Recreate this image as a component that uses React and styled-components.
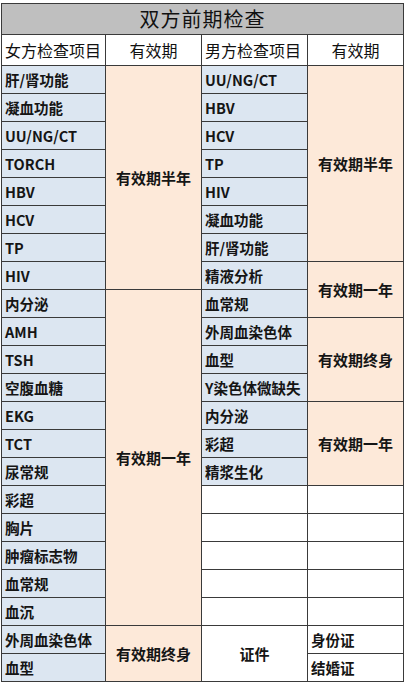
import styled, { createGlobalStyle } from 'styled-components';

const GlobalStyle = createGlobalStyle`
  html, body {
    margin: 0;
    padding: 0;
    background: #ffffff;
  }
  body {
    font-family: "Noto Sans CJK SC", "Noto Sans", sans-serif;
    color: #111111;
  }
`;

const PEACH = '#fde9d9';
const BLUE = '#dce6f1';

// each row: [left item, left period (null = covered by span), right item, right period]
const rows = [
  ['肝/肾功能', { text: '有效期半年', span: 8, fill: PEACH }, 'UU/NG/CT', { text: '有效期半年', span: 7, fill: PEACH }],
  ['凝血功能', null, 'HBV', null],
  ['UU/NG/CT', null, 'HCV', null],
  ['TORCH', null, 'TP', null],
  ['HBV', null, 'HIV', null],
  ['HCV', null, '凝血功能', null],
  ['TP', null, '肝/肾功能', null],
  ['HIV', null, '精液分析', { text: '有效期一年', span: 2, fill: PEACH }],
  ['内分泌', { text: '有效期一年', span: 12, fill: PEACH }, '血常规', null],
  ['AMH', null, '外周血染色体', { text: '有效期终身', span: 3, fill: PEACH }],
  ['TSH', null, '血型', null],
  ['空腹血糖', null, 'Y染色体微缺失', null],
  ['EKG', null, '内分泌', { text: '有效期一年', span: 3, fill: PEACH }],
  ['TCT', null, '彩超', null],
  ['尿常规', null, '精浆生化', null],
  ['彩超', null, '', { text: '', span: 1, fill: '#fff' }],
  ['胸片', null, '', { text: '', span: 1, fill: '#fff' }],
  ['肿瘤标志物', null, '', { text: '', span: 1, fill: '#fff' }],
  ['血常规', null, '', { text: '', span: 1, fill: '#fff' }],
  ['血沉', null, '', { text: '', span: 1, fill: '#fff' }],
  ['外周血染色体', { text: '有效期终身', span: 2, fill: PEACH }, { text: '证件', span: 2 }, '身份证'],
  ['血型', null, null, '结婚证'],
];

export default function App() {
  return (
    <>
      <GlobalStyle />
      <Wrap>
        <Table>
          <colgroup>
            <col style={{ width: 104 }} />
            <col style={{ width: 96 }} />
            <col style={{ width: 106 }} />
            <col style={{ width: 96 }} />
          </colgroup>
          <tbody>
            <tr>
              <Title colSpan={4}>双方前期检查</Title>
            </tr>
            <tr>
              <Head $left>女方检查项目</Head>
              <Head>有效期</Head>
              <Head $left>男方检查项目</Head>
              <Head>有效期</Head>
            </tr>
            {rows.map(([li, lp, ri, rp], i) => (
              <Row key={i}>
                <Item $fill={BLUE}>{li}</Item>
                {lp && (
                  <Period rowSpan={lp.span} $fill={lp.fill}>{lp.text}</Period>
                )}
                {typeof ri === 'string' && (
                  <Item $fill={ri ? BLUE : '#fff'}>{ri}</Item>
                )}
                {ri && typeof ri === 'object' && (
                  <Period rowSpan={ri.span} $fill="#fff">{ri.text}</Period>
                )}
                {typeof rp === 'string' && <Item $fill="#fff">{rp}</Item>}
                {rp && typeof rp === 'object' && (
                  <Period rowSpan={rp.span} $fill={rp.fill}>{rp.text}</Period>
                )}
              </Row>
            ))}
          </tbody>
        </Table>
      </Wrap>
    </>
  );
}

const Wrap = styled.div`
  padding: 3px 0 0 1px;
  width: 406px;
  height: 687px;
  box-sizing: border-box;
  overflow: hidden;
`;

const Table = styled.table`
  border-collapse: collapse;
  table-layout: fixed;
  width: 403px;
`;

const Title = styled.td`
  height: 30px;
  background: #bfbfbf;
  border: 1px solid #3a3a3a;
  text-align: center;
  font-size: 20px;
  font-weight: 400;
  letter-spacing: 1px;
  padding: 0;
  line-height: 30px;
`;

const Head = styled.td`
  height: 30px;
  background: #ffffff;
  border: 1px solid #3a3a3a;
  text-align: ${(p) => (p.$left ? 'left' : 'center')};
  padding: 0 0 0 ${(p) => (p.$left ? '3px' : '0')};
  font-size: 16px;
  font-weight: 400;
  white-space: nowrap;
`;

const Row = styled.tr`
  height: 28px;
`;

const Item = styled.td`
  height: 27px;
  background: ${(p) => p.$fill};
  border: 1px solid #3a3a3a;
  padding: 0 0 0 3px;
  font-size: 14.5px;
  font-weight: 700;
  white-space: nowrap;
  overflow: hidden;
  color: #151515;
`;

const Period = styled.td`
  background: ${(p) => p.$fill};
  border: 1px solid #3a3a3a;
  text-align: center;
  padding: 0;
  font-size: 15px;
  font-weight: 700;
  white-space: nowrap;
  color: #151515;
`;
